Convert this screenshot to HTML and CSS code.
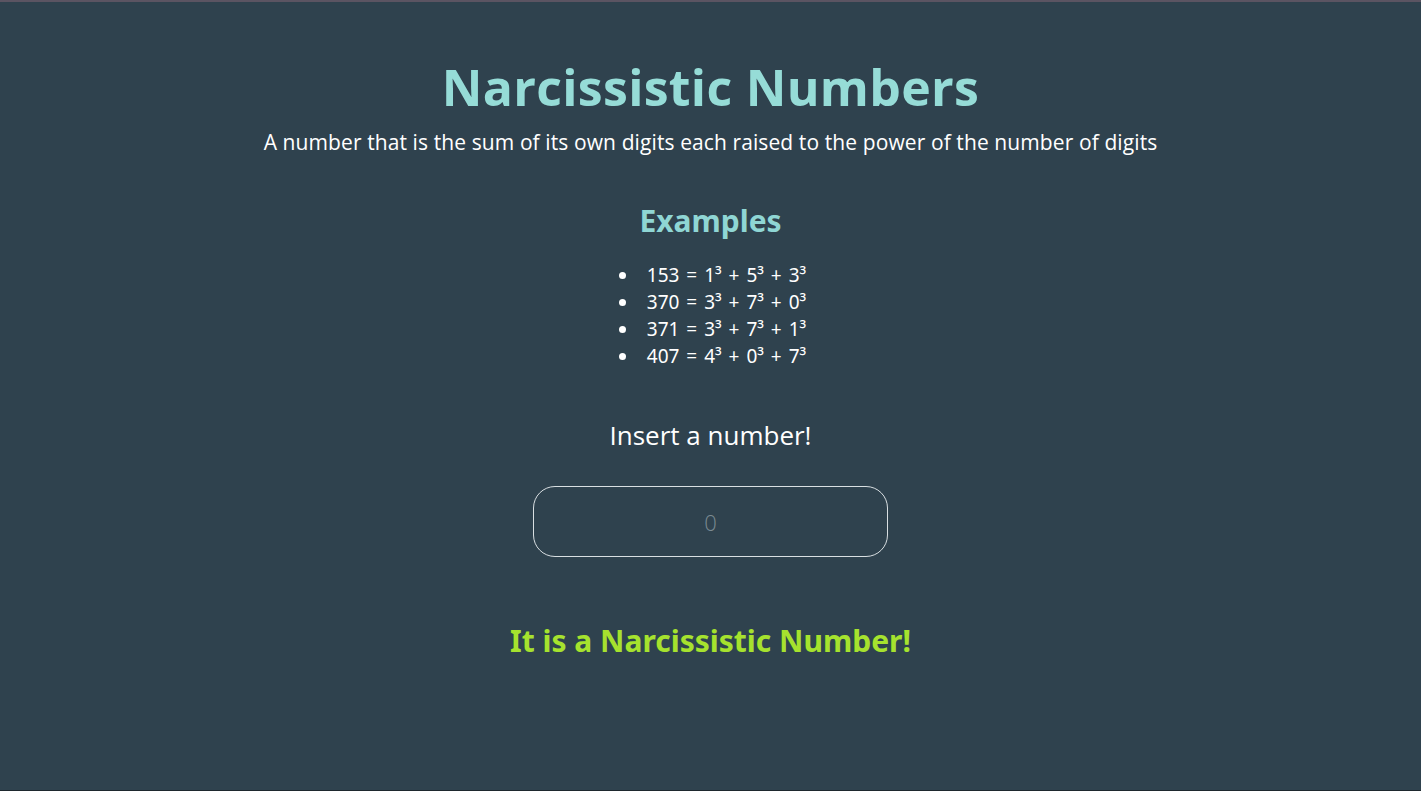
FILE: index.html
```html
<!DOCTYPE html>
<html lang="en">
<head>
<meta charset="utf-8">
<title>Narcissistic Numbers</title>
<link rel="stylesheet" href="styles.css">
</head>
<body>
<main class="page">
  <header class="intro">
    <h1 class="title">Narcissistic Numbers</h1>
    <p class="subtitle">A number that is the sum of its own digits each raised to the power of the number of digits</p>
  </header>
  <section class="examples">
    <h2 class="examples-title">Examples</h2>
    <ul class="examples-list">
      <li>153 = 1³ + 5³ + 3³</li>
      <li>370 = 3³ + 7³ + 0³</li>
      <li>371 = 3³ + 7³ + 1³</li>
      <li>407 = 4³ + 0³ + 7³</li>
    </ul>
  </section>
  <section class="check">
    <label class="check-label" for="num">Insert a number!</label>
    <input class="check-input" id="num" type="number" placeholder="0">
    <p class="result">It is a Narcissistic Number!</p>
  </section>
</main>
</body>
</html>
```
FILE: styles.css
```css
html, body {
  margin: 0;
  height: 100%;
}
body {
  background: #2f424e;
  border-top: 2px solid #5b5462;
  border-bottom: 1px solid #1e282e;
  box-sizing: border-box;
  font-family: "Open Sans", "Noto Sans", sans-serif;
  color: #ffffff;
}
.page {
  display: flex;
  flex-direction: column;
  align-items: center;
  padding-top: 53px;
}
.intro {
  display: flex;
  flex-direction: column;
  align-items: center;
}
.title {
  margin: 0;
  font-family: "Open Sans", sans-serif;
  font-weight: 700;
  font-size: 50px;
  line-height: 64px;
  color: #96dcd7;
  letter-spacing: 0.3px;
}
.subtitle {
  margin: 0;
  margin-top: 9px;
  font-family: "Open Sans", sans-serif;
  font-size: 21px;
  line-height: 28px;
  letter-spacing: 0.1px;
  color: #ffffff;
}
.examples {
  display: flex;
  flex-direction: column;
  align-items: center;
  margin-top: 45px;
}
.examples-title {
  margin: 0;
  font-family: "Noto Sans", sans-serif;
  font-weight: 700;
  font-size: 30px;
  line-height: 40px;
  color: #8fd6d4;
}
.examples-list {
  margin: 21px 0 0 0;
  padding: 0 0 0 24px;
  font-family: "Noto Sans", sans-serif;
  font-size: 19px;
  line-height: 27px;
  word-spacing: 2px;
  color: #ffffff;
}
.examples-list li {
  padding-left: 8px;
}
.check {
  display: flex;
  flex-direction: column;
  align-items: center;
  margin-top: 48px;
}
.check-label {
  font-family: "Open Sans", sans-serif;
  font-size: 26px;
  line-height: 34px;
  color: #ffffff;
}
.check-input {
  margin-top: 34px;
  width: 355px;
  height: 71px;
  box-sizing: border-box;
  border: 1px solid #d9dfe2;
  border-radius: 22px;
  background: transparent;
  color: #ffffff;
  text-align: center;
  font-family: "Open Sans", sans-serif;
  font-size: 22px;
  font-weight: 300;
  outline: none;
  -moz-appearance: textfield;
}
.check-input::-webkit-outer-spin-button,
.check-input::-webkit-inner-spin-button {
  -webkit-appearance: none;
  margin: 0;
}
.check-input::placeholder {
  color: #7b8a92;
}
.result {
  margin: 64px 0 0 0;
  font-family: "Noto Sans", sans-serif;
  font-weight: 700;
  font-size: 30px;
  line-height: 40px;
  color: #a6e22e;
}
```
